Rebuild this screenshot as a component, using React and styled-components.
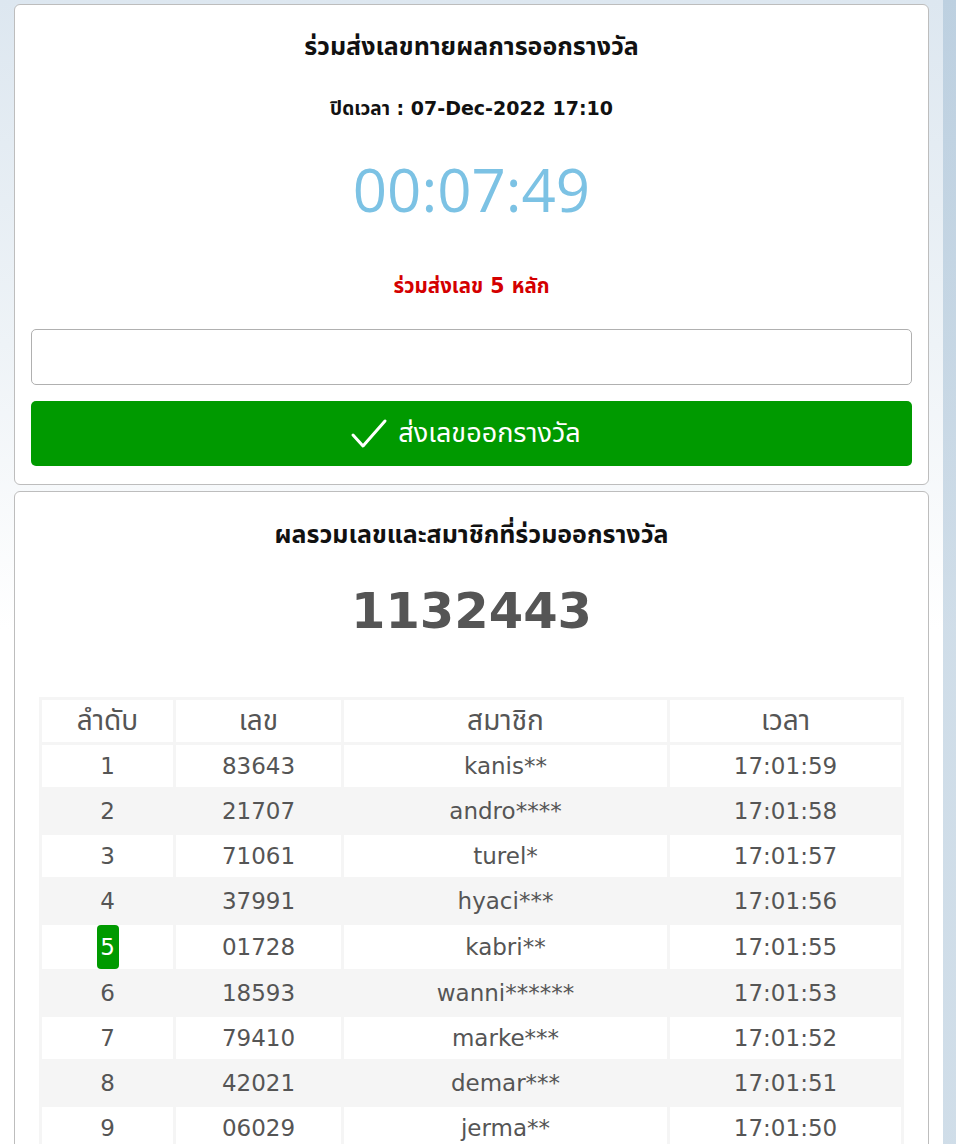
import React from "react";
import styled, { createGlobalStyle } from "styled-components";

const GlobalStyle = createGlobalStyle`
  html, body {
    margin: 0;
    padding: 0;
  }
  body {
    min-height: 1144px;
    font-family: "DejaVu Sans", "Noto Sans Thai", "Loma", sans-serif;
    background:
      linear-gradient(to right, transparent 943px, rgba(150, 180, 205, 0.45) 943px),
      linear-gradient(180deg, #dde7f0 0%, #eef3f7 30%, #ffffff 55%);
    background-attachment: fixed;
  }
`;

const Page = styled.div`
  padding: 4px 27px 0 14px;
  display: flex;
  flex-direction: column;
  gap: 6px;
`;

const Card = styled.div`
  background: #fff;
  border: 1px solid #bdbdbd;
  border-radius: 6px;
  padding: ${(p) => p.$pad || "0 16px 18px"};
  display: flex;
  flex-direction: column;
  align-items: center;
`;

const Title = styled.h2`
  margin: 0;
  font-size: 25px;
  font-weight: bold;
  color: #111;
  line-height: 30px;
  padding-top: ${(p) => p.$top || "27px"};
`;

const CloseTime = styled.div`
  margin-top: 33px;
  font-size: 19px;
  font-weight: bold;
  color: #111;
  line-height: 26px;
`;

const Timer = styled.div`
  margin-top: 26px;
  font-family: "Open Sans", sans-serif;
  font-size: 60px;
  line-height: 84px;
  color: #7cc2e4;
`;

const Hint = styled.div`
  margin-top: 42px;
  font-size: 20.5px;
  font-weight: bold;
  color: #d40000;
  line-height: 26px;
`;

const NumberInput = styled.input`
  box-sizing: border-box;
  margin-top: 30px;
  width: 100%;
  height: 56px;
  border: 1px solid #b0b0b0;
  border-radius: 5px;
  font-size: 22px;
  padding: 0 12px;
  outline: none;
`;

const SubmitButton = styled.button`
  box-sizing: border-box;
  margin-top: 16px;
  width: 100%;
  height: 65px;
  border: none;
  border-radius: 5px;
  background: #009a00;
  color: #fff;
  font-family: inherit;
  font-size: 27px;
  padding: 0 12px 0 0;
  display: flex;
  align-items: center;
  justify-content: center;
  gap: 10px;
  cursor: pointer;
`;

const Total = styled.div`
  margin-top: 29px;
  font-size: 49.5px;
  font-weight: bold;
  color: #555;
  line-height: 64px;
`;

const Table = styled.table`
  margin-top: 54px;
  width: 865px;
  border-collapse: separate;
  border-spacing: 3px;
  background: #f5f5f5;
  color: #555;
  font-size: 23px;
  table-layout: fixed;
`;

const Row = styled.tr`
  background: ${(p) => (p.$striped ? "#f5f5f5" : "#fff")};
`;

const Cell = styled.td`
  height: 42px;
  padding: 0;
  text-align: center;
  vertical-align: middle;
`;

const HeadCell = styled(Cell).attrs({ as: "th" })`
  font-weight: normal;
  font-size: 28px;
  line-height: 42px;
`;

const Badge = styled.span`
  display: inline-block;
  background: #009a00;
  color: #fff;
  border-radius: 4px;
  padding: 0 2px;
  line-height: 44px;
  height: 44px;
  min-width: 18px;
`;

const rows = [
  ["1", "83643", "kanis**", "17:01:59"],
  ["2", "21707", "andro****", "17:01:58"],
  ["3", "71061", "turel*", "17:01:57"],
  ["4", "37991", "hyaci***", "17:01:56"],
  ["5", "01728", "kabri**", "17:01:55"],
  ["6", "18593", "wanni******", "17:01:53"],
  ["7", "79410", "marke***", "17:01:52"],
  ["8", "42021", "demar***", "17:01:51"],
  ["9", "06029", "jerma**", "17:01:50"],
];

const Check = () => (
  <svg width="38" height="32" viewBox="0 0 38 32" fill="none">
    <path d="M3 17 L13 28 L35 3" stroke="#fff" strokeWidth="3" strokeLinecap="round" strokeLinejoin="round" />
  </svg>
);

export default function App() {
  return (
    <>
      <GlobalStyle />
      <Page>
        <Card>
          <Title>ร่วมส่งเลขทายผลการออกรางวัล</Title>
          <CloseTime>ปิดเวลา : 07-Dec-2022 17:10</CloseTime>
          <Timer>00:07:49</Timer>
          <Hint>ร่วมส่งเลข 5 หลัก</Hint>
          <NumberInput type="text" />
          <SubmitButton>
            <Check />
            ส่งเลขออกรางวัล
          </SubmitButton>
        </Card>
        <Card $pad="0 24px 0">
          <Title $top="28px">ผลรวมเลขและสมาชิกที่ร่วมออกรางวัล</Title>
          <Total>1132443</Total>
          <Table>
            <colgroup>
              <col style={{ width: 131 }} />
              <col style={{ width: 165 }} />
              <col style={{ width: 323 }} />
              <col />
            </colgroup>
            <thead>
              <Row>
                <HeadCell>ลำดับ</HeadCell>
                <HeadCell>เลข</HeadCell>
                <HeadCell>สมาชิก</HeadCell>
                <HeadCell>เวลา</HeadCell>
              </Row>
            </thead>
            <tbody>
              {rows.map((r, i) => (
                <Row key={r[0]} $striped={i % 2 === 1}>
                  <Cell>{r[0] === "5" ? <Badge>{r[0]}</Badge> : r[0]}</Cell>
                  <Cell>{r[1]}</Cell>
                  <Cell>{r[2]}</Cell>
                  <Cell>{r[3]}</Cell>
                </Row>
              ))}
            </tbody>
          </Table>
        </Card>
      </Page>
    </>
  );
}
